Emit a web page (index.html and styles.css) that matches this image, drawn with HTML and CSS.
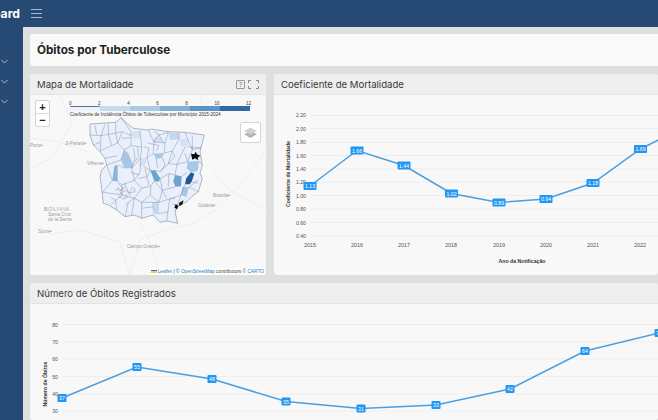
FILE: index.html
```html
<!DOCTYPE html>
<html>
    <head>
        <title>Painel de Tuberculose</title>
        <link rel="stylesheet" href="styles.css">
    </head>
    <body>
        <header class="top_bar">
            <div class="brand"><span>Dashboard</span></div>
            <svg class="burger" width="11" height="11" viewBox="0 0 11 11"><path d="M0 1.500h11M0 5.500h11M0 9.500h11" stroke="#a9bbd0" stroke-width="1" fill="none"/></svg>
        </header>
        <div class="page">
            <nav class="side_nav">
                <svg width="7" height="5" viewBox="0 0 7 5"><path d="M.5 1l3 3 3-3" class="chev"/></svg>
                <svg width="7" height="5" viewBox="0 0 7 5"><path d="M.5 1l3 3 3-3" class="chev"/></svg>
                <svg width="7" height="5" viewBox="0 0 7 5"><path d="M.5 1l3 3 3-3" class="chev"/></svg>
            </nav>
            <main class="content">
                <div class="title_box"><h1>Óbitos por Tuberculose</h1></div>
                <div class="chart_row">
                    <section class="card map_card">
                        <div class="card_head">
                            <h2>Mapa de Mortalidade</h2>
                            <div class="head_icons">
                                <span class="help_icon">?</span>
                                <svg width="11" height="9" viewBox="0 0 11 9"><path d="M.5 3V.5H3M8 .5h2.500V3M10.500 6v2.500H8M3 8.500H.5V6" fill="none" stroke="#888" stroke-width="1"/></svg>
                            </div>
                        </div>
                        <div class="map_body">
                            <svg class="map_svg" width="236" height="180" viewBox="30 95 236 180">
                                <!-- base map roads -->
                                <g fill="none" stroke="#eeeeee" stroke-width="1">
                                    <path d="M30 138l30 4 28 10"/>
                                    <path d="M140 222l10 20 10 33"/>
                                    <path d="M266 150l-30 40-20 20-25 14-25 6-26 10-10 35"/>
                                    <path d="M30 220l20 14 30-4 40 12 10 33"/>
                                    <path d="M200 95l6 30M212 170l18 20 36 20"/>
                                    <path d="M60 95l12 28-20 35-22 10"/>
                                </g>
                                <g class="map_label">
                                    <text x="65" y="145">Ji-Paraná•</text>
                                    <text x="87" y="165">Vilhena•</text>
                                    <text x="30" y="147">Porto•</text>
                                    <text x="213" y="197">Brasília•</text>
                                    <text x="198" y="207">Goiânia•</text>
                                    <text x="127" y="248">Campo Grande•</text>
                                    <text x="38" y="233">Sucre•</text>
                                    <text x="48" y="216">Santa Cruz</text>
                                    <text x="48" y="221">de la Sierra</text>
                                </g>
                                <text class="country_label" x="44" y="211">BOLIVIA</text>
                                <!-- municipios -->
                                <g transform="translate(85 115) scale(.3333)">
                                    <path class="muni" d="M15 27L92 22L108 8L130 28L145 40L190 45L198 42L250 50L300 52L358 60L350 90L345 110L352 150L345 175L352 190L340 230L320 245L305 260L285 270L270 290L278 325L245 318L225 322L205 300L170 310L148 300L120 305L95 285L70 270L55 265L50 220L45 185L50 165L65 150L60 130L45 110L25 90L15 60Z"/>
                                    <path class="c2" d="M250 52L282 54L282 72L255 76Z"/>
                                    <path class="c1" d="M282 72L308 72L310 96L288 94Z"/>
                                    <path class="c1" d="M138 50L165 47L168 68L145 72Z"/>
                                    <path class="c1" d="M205 68L228 66L232 80L208 84Z"/>
                                    <path class="c3" d="M118 105L130 115L145 150L140 160L118 160L108 135Z"/>
                                    <path class="c4" d="M88 152L98 150L98 198L82 196Z"/>
                                    <path class="c5" d="M196 166L210 166L226 190L222 200L208 198Z"/>
                                    <path class="c5" d="M270 180L290 184L288 214L272 215L265 200Z"/>
                                    <path class="c3" d="M308 140L342 138L338 168L318 172L305 160Z"/>
                                    <path class="c8" d="M318 172L328 176L320 200L314 208L300 208L304 190Z"/>
                                    <path class="c3" d="M292 216L312 216L304 246L288 240Z"/>
                                    <path class="c2" d="M200 262L222 262L222 296L205 298Z"/>
                                    <path class="c3" d="M205 116L238 114L230 128L214 132Z"/>
                                    <path class="c1" d="M166 130L186 128L178 156L164 152Z"/>
                                    <g class="borders">
                                        <path d="M15 60L48 62L46 108M48 62L60 28M48 62L92 54L92 22M92 54L98 84L62 100L46 108"/>
                                        <path d="M98 84L118 105L108 135L65 150M118 105L138 92L138 50L108 8M138 92L170 96L165 47M112 50L138 62M98 84L112 50L92 54"/>
                                        <path d="M170 96L166 130L140 160L148 196L110 210L98 198L82 196L54 232"/>
                                        <path d="M190 45L206 80L205 116L186 128L196 166L178 156M206 80L240 84L250 52M240 84L238 114L262 108L282 72"/>
                                        <path d="M262 108L250 146L226 170L210 166M250 146L276 148L308 140L322 104L308 72M322 104L350 96M276 148L270 180L252 176L226 190"/>
                                        <path d="M148 196L170 220L198 212L208 198L232 226L272 215M170 220L148 250L112 240L110 210M112 240L92 256L95 285"/>
                                        <path d="M232 226L222 262L200 262L170 262L148 250M170 262L170 310M222 262L288 240L270 290M254 252L245 318"/>
                                        <path d="M310 96L348 100M138 68L110 70M300 52L308 72M54 232L112 240M342 138L352 150M320 200L340 205M312 216L340 230"/>
                                        <path d="M96 218L108 226L122 214L132 234L144 216M104 236L124 226L138 242M118 248L126 236M160 190L186 186L192 210M138 172L164 180M188 84L222 92L214 108"/>
                                        <path d="M100 205L116 222L104 228L112 240M122 214L116 204M132 234L150 230L148 218M90 226L104 222M100 244L116 252L130 246M130 262L148 250M120 272L130 262L120 305M78 248L92 256L78 270"/>
                                        <path d="M146 100L150 130L140 160M158 96L160 126L148 142M186 128L192 100L178 96M214 132L218 160M232 128L240 150L226 170M262 108L270 124L250 146"/>
                                        <path d="M236 84L222 60M222 60L206 80M208 50L222 60L250 52M282 54L282 72M322 62L322 104M300 96L288 120L276 148M308 140L300 115"/>
                                        <path d="M186 186L180 160M196 166L186 186M226 190L232 226M252 176L250 215M290 184L308 172M300 208L288 240M312 216L340 195"/>
                                        <path d="M30 30L35 60M70 25L70 58M70 58L80 90M25 90L46 82M60 130L98 122M65 150L82 196M100 150L118 160M148 196L166 170L166 130"/>
                                        <path d="M198 212L196 240L170 262M196 240L222 262M148 250L140 300M170 280L205 275M222 296L250 290M245 250L232 226M270 250L254 252M262 268L285 270"/>
                                    </g>
                                    <path class="cb" d="M318 116L328 118L332 110L336 118L346 122L338 128L340 136L330 130L322 134Z"/>
                                    <path class="cb" d="M272 268L280 272L276 282L268 278ZM282 264L296 256L292 268L284 274Z"/>
                                </g>
                            </svg>
                            <div class="zoom_box"><span>+</span><span>−</span></div>
                            <div class="legend">
                                <div class="legend_ticks"><span>0</span><span>2</span><span>4</span><span>6</span><span>8</span><span>10</span><span>12</span></div>
                                <div class="legend_bar"><i class="s0"></i><i class="s1"></i><i class="s2"></i><i class="s3"></i><i class="s4"></i><i class="s5"></i></div>
                                <div class="legend_text">Coeficiente de Incidência Óbitos de Tuberculose por Município 2015-2024</div>
                            </div>
                            <div class="layer_btn">
                                <svg width="13" height="13" viewBox="0 0 13 13"><path d="M6.500 5L13 8.200 6.500 12 0 8.200z" fill="#b4b7ba"/><path d="M6.500 1.500L13 5 6.500 8.500 0 5z" fill="#cfd2d5"/></svg>
                            </div>
                            <div class="attribution"><span class="flag"></span><a>Leaflet</a> | © <a>OpenStreetMap</a> contributors © <a>CARTO</a></div>
                        </div>
                    </section>
                    <section class="card coef_card">
                        <div class="card_head"><h2>Coeficiente de Mortalidade</h2></div>
                        <div class="chart_body">
                            <svg width="384" height="180" viewBox="274 95 384 180">
                                <g class="grid">
                                    <path d="M310 115.500H700M310 128.500H700M310 142.500H700M310 155.500H700M310 169H700M310 182H700M310 195.500H700M310 209H700M310 222.500H700M310 236H700"/>
                                </g>
                                <g class="tick_y">
                                    <text x="306" y="117">2.20</text><text x="306" y="130.500">2.00</text><text x="306" y="144">1.80</text><text x="306" y="157.500">1.60</text><text x="306" y="171">1.40</text><text x="306" y="184">1.20</text><text x="306" y="197.500">1.00</text><text x="306" y="211">0.80</text><text x="306" y="224.500">0.60</text><text x="306" y="238">0.40</text>
                                </g>
                                <g class="tick_x">
                                    <text x="310" y="247">2015</text><text x="357" y="247">2016</text><text x="404" y="247">2017</text><text x="451" y="247">2018</text><text x="499" y="247">2019</text><text x="546" y="247">2020</text><text x="593" y="247">2021</text><text x="640" y="247">2022</text>
                                </g>
                                <text class="axis_name" x="522" y="263">Ano da Notificação</text>
                                <text class="axis_name" transform="translate(290 174) rotate(-90)">Coeficiente de Mortalidade</text>
                                <polyline class="line" points="310,186 357,150.500 404,165.500 451.500,193.500 499,202.500 546,199 593,183 640.500,149 688,125"/>
                                <g class="point"><rect x="303.500" y="182" width="13" height="8"/><text x="310" y="188">1.13</text></g>
                                <g class="point"><rect x="350.500" y="146.500" width="13" height="8"/><text x="357" y="152.500">1.66</text></g>
                                <g class="point"><rect x="397.500" y="161.500" width="13" height="8"/><text x="404" y="167.500">1.44</text></g>
                                <g class="point"><rect x="445" y="189.500" width="13" height="8"/><text x="451.500" y="195.500">1.02</text></g>
                                <g class="point"><rect x="492.500" y="198.500" width="13" height="8"/><text x="499" y="204.500">0.89</text></g>
                                <g class="point"><rect x="539.500" y="195" width="13" height="8"/><text x="546" y="201">0.94</text></g>
                                <g class="point"><rect x="586.500" y="179" width="13" height="8"/><text x="593" y="185">1.18</text></g>
                                <g class="point"><rect x="634" y="145" width="13" height="8"/><text x="640.500" y="151">1.69</text></g>
                            </svg>
                        </div>
                    </section>
                </div>
                <section class="card wide_card">
                    <div class="card_head"><h2>Número de Óbitos Registrados</h2></div>
                    <div class="chart_body">
                        <svg width="628" height="116" viewBox="30 304 628 116">
                            <g class="grid">
                                <path d="M62 324.500H700M62 342H700M62 359H700M62 376.500H700M62 394H700M62 411H700"/>
                            </g>
                            <g class="tick_y">
                                <text x="58" y="326.500">80</text><text x="58" y="344">70</text><text x="58" y="361">60</text><text x="58" y="378.500">50</text><text x="58" y="396">40</text><text x="58" y="413">30</text>
                            </g>
                            <text class="axis_name" transform="translate(47 384) rotate(-90)">Número de Óbitos</text>
                            <polyline class="line" points="62,398 137,367 212,379 286,401.500 361,408.500 436,405 510,389 585,351 659,333"/>
                            <g class="point"><rect x="57.500" y="394" width="9" height="8"/><text x="62" y="400">37</text></g>
                            <g class="point"><rect x="132.500" y="363" width="9" height="8"/><text x="137" y="369">55</text></g>
                            <g class="point"><rect x="207.500" y="375" width="9" height="8"/><text x="212" y="381">48</text></g>
                            <g class="point"><rect x="281.500" y="397.500" width="9" height="8"/><text x="286" y="403.500">35</text></g>
                            <g class="point"><rect x="356.500" y="404.500" width="9" height="8"/><text x="361" y="410.500">31</text></g>
                            <g class="point"><rect x="431.500" y="401" width="9" height="8"/><text x="436" y="407">33</text></g>
                            <g class="point"><rect x="505.500" y="385" width="9" height="8"/><text x="510" y="391">42</text></g>
                            <g class="point"><rect x="580.500" y="347" width="9" height="8"/><text x="585" y="353">64</text></g>
                            <g class="point"><rect x="654.500" y="329" width="9" height="8"/><text x="659" y="335">75</text></g>
                        </svg>
                    </div>
                </section>
            </main>
        </div>
    </body>
</html>
```

FILE: styles.css
```css
html, body {
    margin: 0;
    height: 420px;
    overflow: hidden;
}
body {
    font-family: "Inter", "Liberation Sans", sans-serif;
    background: #264a73;
    color: #252525;
}
.top_bar {
    height: 27px;
    display: flex;
    align-items: center;
    gap: 11px;
    background: #264a73;
}
.brand {
    width: 20px;
    display: flex;
    justify-content: flex-end;
    overflow: hidden;
}
.brand span {
    color: #fff;
    font-size: 12.2px;
    font-weight: 700;
}
.page {
    display: flex;
    height: 393px;
}
.side_nav {
    width: 23px;
    flex: none;
    box-sizing: border-box;
    padding: 32px 0 0 1px;
    display: flex;
    flex-direction: column;
    gap: 15px;
}
.chev {
    fill: none;
    stroke: #a9bbd0;
    stroke-width: 1;
}
.content {
    flex: none;
    width: 635px;
    box-sizing: border-box;
    padding: 7px 0 0 7px;
    background: #dedfdf;
    overflow: hidden;
}
.title_box {
    height: 32px;
    display: flex;
    align-items: center;
    padding-left: 7px;
    background: #f9f9f9;
    border-radius: 3px 0 0 3px;
}
h1 {
    margin: 0;
    font-size: 11.7px;
    font-weight: 700;
    color: #1f1f1f;
}
h2 {
    margin: 0;
    font-size: 9.6px;
    font-weight: 400;
    color: #3a3a3a;
}
.chart_row {
    display: flex;
    gap: 8px;
    margin-top: 8px;
}
.card {
    background: #f8f8f8;
    border-radius: 3px;
    overflow: hidden;
}
.card_head {
    height: 21px;
    box-sizing: border-box;
    padding: 0 7px;
    display: flex;
    align-items: center;
    justify-content: space-between;
    background: #eeeeee;
    border-bottom: 1px solid #e3e3e3;
}
.map_card {
    width: 236px;
    flex: none;
}
.coef_card {
    width: 384px;
    flex: none;
}
.wide_card {
    margin-top: 8px;
    width: 628px;
}
.head_icons {
    display: flex;
    align-items: center;
    gap: 3px;
}
.help_icon {
    width: 7px;
    height: 7px;
    border: 1px solid #999;
    border-radius: 1px;
    font-size: 6px;
    line-height: 7px;
    text-align: center;
    color: #777;
}
.map_body, .chart_body {
    position: relative;
    height: 180px;
}
.wide_card .chart_body {
    height: 116px;
}
.map_body {
    background: #f8f8f8;
}
.map_body svg, .chart_body svg {
    display: block;
}
.map_label text {
    font-family: "Liberation Sans", sans-serif;
    font-size: 4.6px;
    fill: #9a9a9a;
}
.country_label {
    font-family: "Liberation Sans", sans-serif;
    font-size: 5.5px;
    letter-spacing: .6px;
    fill: #a0a0a0;
}
.muni {
    fill: #e9f0fc;
    stroke: #66738c;
    stroke-width: 1.5;
}
.borders path {
    fill: none;
    stroke: #6f7c96;
    stroke-width: 1.2;
}
.c1 { fill: #d2e1f3; }
.c2 { fill: #c3d8ee; }
.c3 { fill: #a6c8e6; }
.c4 { fill: #8cb6d8; }
.c5 { fill: #6fa3cd; }
.c8 { fill: #1f5c96; }
.cb { fill: #0a0a0a; }
.zoom_box {
    position: absolute;
    left: 5px;
    top: 5px;
    width: 13px;
    height: 25px;
    display: flex;
    flex-direction: column;
    background: #fff;
    border: 1px solid #d2d2d2;
    border-radius: 2px;
}
.zoom_box span {
    flex: 1;
    font: 700 11px/12px "Liberation Sans", sans-serif;
    text-align: center;
    color: #222;
}
.zoom_box span + span {
    border-top: 1px solid #ddd;
}
.legend {
    position: absolute;
    left: 39px;
    top: 6px;
    width: 182px;
    font-family: "Liberation Sans", sans-serif;
}
.legend_ticks {
    display: flex;
    justify-content: space-between;
    font-size: 4.5px;
    line-height: 5px;
    color: #333;
}
.legend_bar {
    display: flex;
    height: 5px;
    margin: 0 1px;
}
.legend_bar i {
    flex: 1;
}
.s0 { background: #eef3fb; border-top: 1px solid #66738c; }
.s1 { background: #c6dbef; }
.s2 { background: #a9cae8; }
.s3 { background: #7fb0d8; }
.s4 { background: #5a93c6; }
.s5 { background: #30699f; }
.legend_text {
    font-size: 4.6px;
    line-height: 7px;
    color: #333;
    margin: 0 0 0 1px;
    white-space: nowrap;
}
.layer_btn {
    position: absolute;
    left: 210px;
    top: 27px;
    width: 21px;
    height: 21px;
    display: flex;
    align-items: center;
    justify-content: center;
    background: #fff;
    border: 1px solid #d4d4d4;
    border-radius: 2px;
    box-sizing: border-box;
}
.attribution {
    position: absolute;
    right: 1px;
    bottom: 0;
    padding: 0 1px;
    font-family: "Liberation Sans", sans-serif;
    font-size: 4.8px;
    line-height: 7px;
    color: #444;
    background: rgba(255, 255, 255, .7);
    white-space: nowrap;
}
.attribution a {
    color: #2d7fc0;
}
.flag {
    display: inline-block;
    width: 6px;
    height: 3px;
    margin-right: 1px;
    background: linear-gradient(#3a66b0 50%, #f2d23c 50%);
}
.grid path {
    fill: none;
    stroke: #eeeeee;
    stroke-width: 1;
}
.tick_y text, .tick_x text, .axis_name, .point text {
    font-family: "Liberation Sans", sans-serif;
}
.tick_y text {
    font-size: 5.2px;
    fill: #555;
    text-anchor: end;
}
.tick_x text {
    font-size: 5.5px;
    fill: #555;
    text-anchor: middle;
}
.axis_name {
    font-size: 5.2px;
    font-weight: 700;
    fill: #333;
    text-anchor: middle;
}
.line {
    fill: none;
    stroke: #4a9fe0;
    stroke-width: 1.5;
}
.point rect {
    fill: #2196f3;
    rx: 1px;
}
.point text {
    font-size: 5.2px;
    fill: #fff;
    text-anchor: middle;
}
```
